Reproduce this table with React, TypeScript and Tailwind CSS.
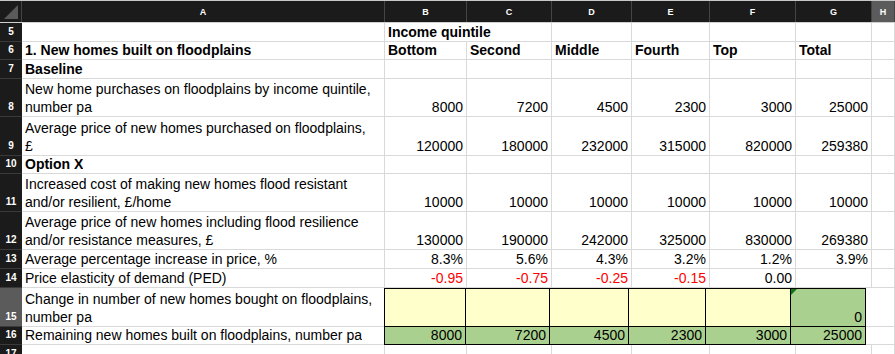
import React from "react";

type Cell = {
  text?: string;
  bold?: boolean;
  right?: boolean;
  red?: boolean;
  bg?: "yellow" | "green";
  boxed?: boolean;
  span?: number;
  flag?: boolean;
};

type Row = { num: number; h: number; cells: Cell[]; selected?: boolean };

const COLS = ["A", "B", "C", "D", "E", "F", "G", "H"];
const WIDTHS = ["w-[363px]", "w-[82px]", "w-[85px]", "w-[80px]", "w-[78px]", "w-[86px]", "w-[76px]", "flex-1"];

const n = (text: string, extra: Partial<Cell> = {}): Cell => ({ text, right: true, ...extra });

const ROWS: Row[] = [
  { num: 5, h: 19, cells: [{}, { text: "Income quintile", bold: true, span: 2 }, {}, {}, {}, {}, {}] },
  {
    num: 6,
    h: 18,
    cells: [
      { text: "1. New homes built on floodplains", bold: true },
      { text: "Bottom", bold: true },
      { text: "Second", bold: true },
      { text: "Middle", bold: true },
      { text: "Fourth", bold: true },
      { text: "Top", bold: true },
      { text: "Total", bold: true },
      {},
    ],
  },
  { num: 7, h: 19, cells: [{ text: "Baseline", bold: true }, {}, {}, {}, {}, {}, {}, {}] },
  {
    num: 8,
    h: 38,
    cells: [
      { text: "New home purchases on floodplains by income quintile, number pa" },
      n("8000"), n("7200"), n("4500"), n("2300"), n("3000"), n("25000"), {},
    ],
  },
  {
    num: 9,
    h: 39,
    cells: [
      // Helvetica in the original wraps the £ onto its own line
      { text: "Average price of new homes purchased on floodplains,\n£" },
      n("120000"), n("180000"), n("232000"), n("315000"), n("820000"), n("259380"), {},
    ],
  },
  { num: 10, h: 18, cells: [{ text: "Option X", bold: true }, {}, {}, {}, {}, {}, {}, {}] },
  {
    num: 11,
    h: 38,
    cells: [
      { text: "Increased cost of making new homes flood resistant and/or resilient, £/home" },
      n("10000"), n("10000"), n("10000"), n("10000"), n("10000"), n("10000"), {},
    ],
  },
  {
    num: 12,
    h: 38,
    cells: [
      { text: "Average price of new homes including flood resilience and/or resistance measures, £" },
      n("130000"), n("190000"), n("242000"), n("325000"), n("830000"), n("269380"), {},
    ],
  },
  {
    num: 13,
    h: 19,
    cells: [
      { text: "Average percentage increase in price, %" },
      n("8.3%"), n("5.6%"), n("4.3%"), n("3.2%"), n("1.2%"), n("3.9%"), {},
    ],
  },
  {
    num: 14,
    h: 19,
    cells: [
      { text: "Price elasticity of demand (PED)" },
      n("-0.95", { red: true }), n("-0.75", { red: true }), n("-0.25", { red: true }), n("-0.15", { red: true }),
      n("0.00"), {}, {},
    ],
  },
  {
    num: 15,
    h: 39,
    selected: true,
    cells: [
      { text: "Change in number of new homes bought on floodplains, number pa" },
      { bg: "yellow", boxed: true }, { bg: "yellow", boxed: true }, { bg: "yellow", boxed: true },
      { bg: "yellow", boxed: true }, { bg: "yellow", boxed: true },
      n("0", { bg: "green", boxed: true, flag: true }), {},
    ],
  },
  {
    num: 16,
    h: 18,
    cells: [
      { text: "Remaining new homes built on floodplains, number pa" },
      n("8000", { bg: "green", boxed: true }), n("7200", { bg: "green", boxed: true }),
      n("4500", { bg: "green", boxed: true }), n("2300", { bg: "green", boxed: true }),
      n("3000", { bg: "green", boxed: true }), n("25000", { bg: "green", boxed: true }), {},
    ],
  },
  { num: 17, h: 19, cells: [{}, {}, {}, {}, {}, {}, {}, {}] },
];

export default function App() {
  return (
    <div className="w-[895px] h-[354px] overflow-hidden bg-white text-black font-['Liberation_Sans',Arial,sans-serif] text-[14px] leading-[18px]">
      <div className="h-px bg-[#c8c8c8]" />
      <div className="flex h-[22px] bg-[#1b1b1b] border-b border-[#d0d0d0]">
        <div className="w-[22px] shrink-0 relative border-r border-[#444]">
          <div className="absolute right-[3px] bottom-[3px] w-0 h-0 border-l-[14px] border-l-transparent border-b-[14px] border-b-[#5a5a5a]" />
        </div>
        {COLS.map((c, i) => (
          <div
            key={c}
            className={`${WIDTHS[i]} shrink-0 flex items-center justify-center text-[9px] font-bold text-white border-r border-[#444] ${
              c === "H" ? "bg-[#5b5b5b]" : ""
            }`}
          >
            {c}
          </div>
        ))}
      </div>
      {ROWS.map((r) => (
        <SheetRow key={r.num} row={r} />
      ))}
    </div>
  );
}

function SheetRow({ row }: { row: Row }) {
  const cells: { cell: Cell; width: string }[] = [];
  let col = 0;
  for (const cell of row.cells) {
    if (col >= WIDTHS.length) break;
    if (cell.span === 2) {
      cells.push({ cell, width: "w-[167px]" });
      col += 2;
    } else {
      cells.push({ cell, width: WIDTHS[col] });
      col += 1;
    }
  }
  return (
    <div className="flex" style={{ height: row.h }}>
      <div
        className={`w-[22px] shrink-0 flex items-end justify-center pb-[2px] text-[10px] leading-[14px] font-bold text-white border-b border-[#3a3a3a] ${
          row.selected ? "bg-[#5b5b5b]" : "bg-[#1b1b1b]"
        }`}
      >
        {row.num}
      </div>
      {cells.map(({ cell, width }, i) => (
        <div
          key={i}
          className={`${width} shrink-0 relative flex items-end px-[3px] ${
            cell.boxed ? "border border-black -ml-px first:ml-0" : "border-r border-b border-[#d9d9d9]"
          } ${cell.bg === "yellow" ? "bg-[#ffffcc]" : cell.bg === "green" ? "bg-[#a9d08e]" : ""} ${
            cell.right ? "justify-end text-right" : ""
          } ${cell.bold ? "font-bold" : ""} ${cell.red ? "text-[#ff0000]" : ""} ${
            row.num === 16 && cell.boxed ? "-mt-px" : ""
          }`}
        >
          {cell.flag && (
            <div className="absolute left-0 top-0 w-0 h-0 border-r-[6px] border-r-transparent border-t-[6px] border-t-[#11751c]" />
          )}
          <span className="whitespace-pre-line overflow-hidden">{cell.text}</span>
        </div>
      ))}
    </div>
  );
}
